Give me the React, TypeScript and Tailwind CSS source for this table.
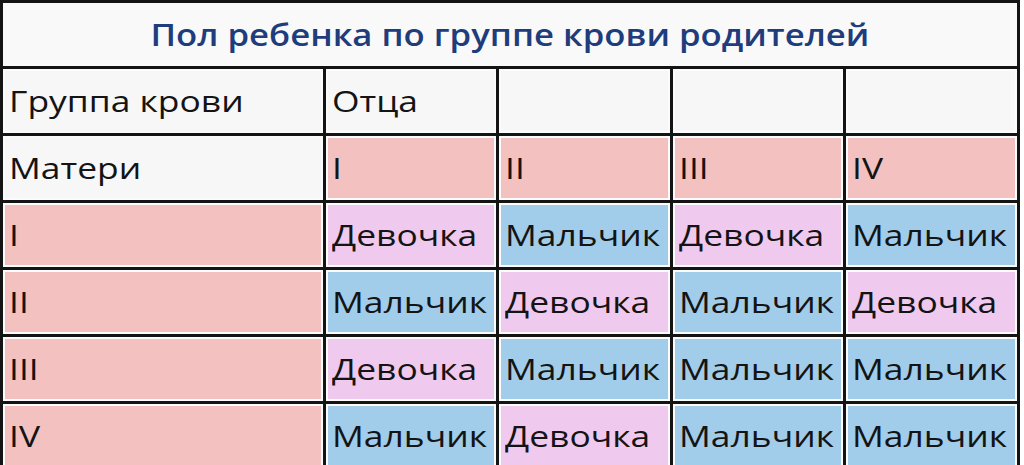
type Kind = "w" | "p" | "g" | "b";

const rows: { text: string; kind: Kind }[][] = [
  [
    { text: "Группа крови", kind: "w" },
    { text: "Отца", kind: "w" },
    { text: "", kind: "w" },
    { text: "", kind: "w" },
    { text: "", kind: "w" },
  ],
  [
    { text: "Матери", kind: "w" },
    { text: "I", kind: "p" },
    { text: "II", kind: "p" },
    { text: "III", kind: "p" },
    { text: "IV", kind: "p" },
  ],
  [
    { text: "I", kind: "p" },
    { text: "Девочка", kind: "g" },
    { text: "Мальчик", kind: "b" },
    { text: "Девочка", kind: "g" },
    { text: "Мальчик", kind: "b" },
  ],
  [
    { text: "II", kind: "p" },
    { text: "Мальчик", kind: "b" },
    { text: "Девочка", kind: "g" },
    { text: "Мальчик", kind: "b" },
    { text: "Девочка", kind: "g" },
  ],
  [
    { text: "III", kind: "p" },
    { text: "Девочка", kind: "g" },
    { text: "Мальчик", kind: "b" },
    { text: "Мальчик", kind: "b" },
    { text: "Мальчик", kind: "b" },
  ],
  [
    { text: "IV", kind: "p" },
    { text: "Мальчик", kind: "b" },
    { text: "Девочка", kind: "g" },
    { text: "Мальчик", kind: "b" },
    { text: "Мальчик", kind: "b" },
  ],
];

const fill: Record<Kind, string> = {
  w: "bg-[#f7f7f7]",
  p: "bg-[#f3c1c0]",
  g: "bg-[#f0c9ef]",
  b: "bg-[#a2cdea]",
};

const Cell = ({ text, kind }: { text: string; kind: Kind }) => (
  <div className="bg-[#fbfbfb] p-[2px] h-[64px]">
    <div className={`${fill[kind]} h-full flex items-center pl-[4px] overflow-hidden`}>
      <span className="inline-block origin-left scale-x-[1.18] text-[30px] leading-none text-[#141414] whitespace-nowrap">
        {text}
      </span>
    </div>
  </div>
);

export default function App() {
  return (
    <div className="w-[1024px] h-[465px] overflow-hidden bg-white" style={{ fontFamily: '"Open Sans", "Noto Sans", sans-serif' }}>
      <div className="w-[1020px] bg-[#141414] p-[3px] flex flex-col gap-[3px]">
        <div className="h-[63px] bg-[#f9f9f9] flex items-center justify-center">
          <span className="inline-block scale-x-[1.12] text-[31px] font-semibold leading-none text-[#1f3c7c] whitespace-nowrap">
            Пол ребенка по группе крови родителей
          </span>
        </div>
        <div className="grid grid-cols-[320px_170px_171px_170px_171px] gap-[3px]">
          {rows.map((row, i) =>
            row.map((c, j) => <Cell key={`${i}-${j}`} text={c.text} kind={c.kind} />)
          )}
        </div>
      </div>
    </div>
  );
}
